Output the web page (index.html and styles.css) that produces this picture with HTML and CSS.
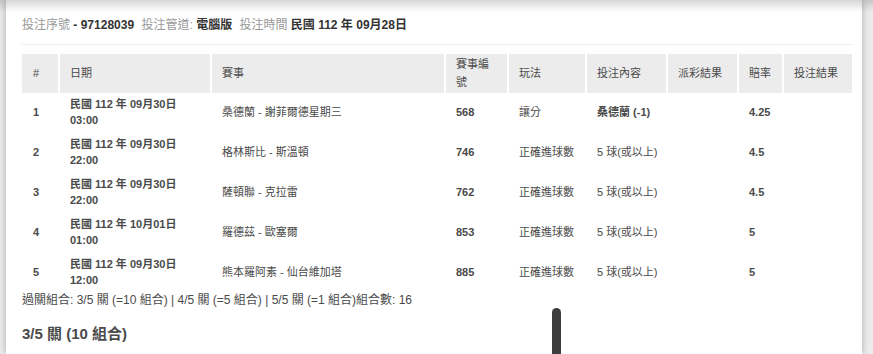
FILE: index.html
```html
<!DOCTYPE html>
<html lang="zh-Hant">
<head>
<meta charset="utf-8">
<link rel="stylesheet" href="styles.css">
</head>
<body>
<div class="panel">
  <div class="info">
    <span class="label">投注序號</span> <span class="value">- 97128039</span>
    <span class="label">投注管道:</span> <span class="value">電腦版</span>
    <span class="label">投注時間</span> <span class="value">民國 112 年 09月28日</span>
  </div>
  <div class="sep"></div>
  <table class="bets">
    <thead>
      <tr>
        <th class="c-no">#</th>
        <th class="c-date">日期</th>
        <th class="c-match">賽事</th>
        <th class="c-id">賽事編號</th>
        <th class="c-type">玩法</th>
        <th class="c-pick">投注內容</th>
        <th class="c-pay">派彩結果</th>
        <th class="c-odds">賠率</th>
        <th class="c-res">投注結果</th>
      </tr>
    </thead>
    <tbody>
      <tr>
        <td class="b">1</td>
        <td class="b">民國 112 年 09月30日<br>03:00</td>
        <td>桑德蘭 - 謝菲爾德星期三</td>
        <td class="b">568</td>
        <td>讓分</td>
        <td class="b">桑德蘭 (-1)</td>
        <td></td>
        <td class="b">4.25</td>
        <td></td>
      </tr>
      <tr>
        <td class="b">2</td>
        <td class="b">民國 112 年 09月30日<br>22:00</td>
        <td>格林斯比 - 斯溫頓</td>
        <td class="b">746</td>
        <td>正確進球數</td>
        <td>5 球(或以上)</td>
        <td></td>
        <td class="b">4.5</td>
        <td></td>
      </tr>
      <tr>
        <td class="b">3</td>
        <td class="b">民國 112 年 09月30日<br>22:00</td>
        <td>薩頓聯 - 克拉雷</td>
        <td class="b">762</td>
        <td>正確進球數</td>
        <td>5 球(或以上)</td>
        <td></td>
        <td class="b">4.5</td>
        <td></td>
      </tr>
      <tr>
        <td class="b">4</td>
        <td class="b">民國 112 年 10月01日<br>01:00</td>
        <td>羅德茲 - 歐塞爾</td>
        <td class="b">853</td>
        <td>正確進球數</td>
        <td>5 球(或以上)</td>
        <td></td>
        <td class="b">5</td>
        <td></td>
      </tr>
      <tr>
        <td class="b">5</td>
        <td class="b">民國 112 年 09月30日<br>12:00</td>
        <td>熊本羅阿素 - 仙台維加塔</td>
        <td class="b">885</td>
        <td>正確進球數</td>
        <td>5 球(或以上)</td>
        <td></td>
        <td class="b">5</td>
        <td></td>
      </tr>
    </tbody>
  </table>
  <div class="summary">過關組合: 3/5 關 (=10 組合) | 4/5 關 (=5 組合) | 5/5 關 (=1 組合)組合數: 16</div>
  <h3 class="combo">3/5 關 (10 組合)</h3>
</div>
<div class="thumb"></div>
</body>
</html>
```

FILE: styles.css
```css
html, body {
  margin: 0;
  padding: 0;
}
body {
  background: #ececec;
  font-family: "Liberation Sans", "Noto Sans CJK TC", sans-serif;
  color: #4a4a4a;
  height: 354px;
  overflow: hidden;
  position: relative;
}
body::before {
  content: "";
  position: absolute;
  left: 0;
  top: 0;
  right: 0;
  height: 12px;
  background: linear-gradient(to bottom, rgba(0,0,0,0.16), rgba(0,0,0,0));
  z-index: 2;
}
.panel {
  margin-left: 6px;
  width: 856px;
  min-height: 354px;
  box-sizing: border-box;
  background: #fff;
  padding: 16px 10px 0 16px;
  box-shadow: 0 0 7px rgba(0,0,0,0.28);
}
.info {
  font-size: 12px;
  line-height: 18px;
}
.info .label {
  color: #999;
}
.info .value {
  color: #333;
  font-weight: bold;
  margin-right: 4px;
}
.sep {
  height: 1px;
  background: #eee;
  margin: 10px 0 9px;
}
.bets {
  width: 830px;
  table-layout: fixed;
  border-collapse: separate;
  border-spacing: 0;
  font-size: 11px;
}
.bets th {
  box-sizing: border-box;
  background: #ececec;
  font-weight: normal;
  text-align: left;
  color: #4a4a4a;
  line-height: 18px;
  padding: 1px 2px 2px 10px;
  border-left: 2px solid #fff;
  height: 39px;
}
.bets th.c-no { border-left: 0; width: 36px; padding-left: 11px; }
.bets th.c-date { width: 152px; }
.bets th.c-match { width: 234px; }
.bets th.c-id { width: 63px; padding-right: 8px; }
.bets th.c-type { width: 78px; }
.bets th.c-pick { width: 81px; }
.bets th.c-pay { width: 71px; }
.bets th.c-odds { width: 45px; }
.bets th.c-res { width: 70px; }
.bets td {
  line-height: 16px;
  padding: 3px 2px 5px 12px;
  height: 32px;
  vertical-align: middle;
  color: #4a4a4a;
  white-space: nowrap;
}
.bets td:first-child {
  padding-left: 11px;
}
.bets td.b {
  font-weight: bold;
}
.summary {
  font-size: 12px;
  line-height: 16px;
  margin-top: -1px;
}
.combo {
  font-size: 15px;
  font-weight: bold;
  line-height: 20px;
  margin: 16px 0 0;
  color: #4a4a4a;
}
.thumb {
  position: absolute;
  left: 552px;
  top: 308px;
  width: 9px;
  height: 60px;
  border-radius: 5px 5px 0 0;
  background: #3d3d3d;
}
```
